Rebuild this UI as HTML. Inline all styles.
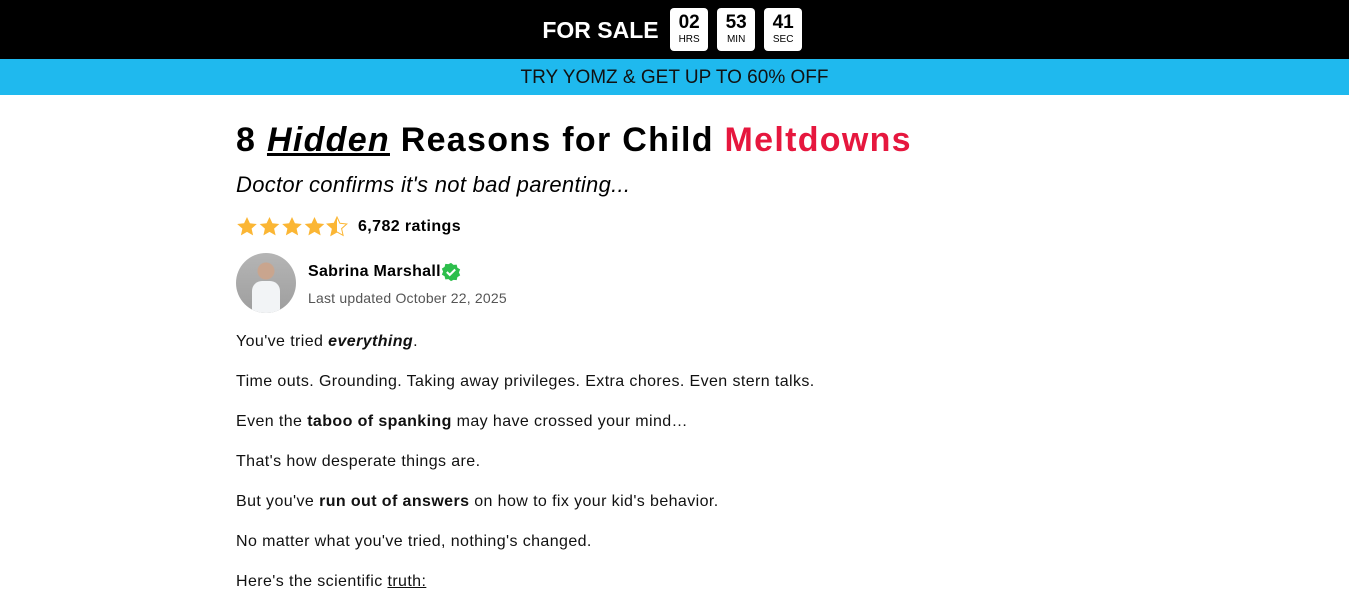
<!DOCTYPE html>
<html><head><meta charset="utf-8"><style>
body{margin:0;background:#fff;font-family:"Liberation Sans",sans-serif;color:#000;width:1349px;height:597px;overflow:hidden}
.top{height:59px;background:#000;display:flex;align-items:center;justify-content:center}
.fs{color:#fff;font-weight:bold;font-size:23px;margin-right:7px;margin-top:2px}
.box{background:#fff;border-radius:4px;width:38px;height:43px;margin:0 4.5px;text-align:center;line-height:1}
.box b{display:block;font-size:19px;margin-top:5px}
.box span{font-size:10px;display:block;margin-top:3px}
.blue{height:36px;background:#1fb9ee;text-align:center;font-size:19px;line-height:37px;color:#111}
.c{position:absolute;left:236px}
h1{margin:0;font-size:34px;top:121px;white-space:nowrap;letter-spacing:1.3px}
h1 i{text-decoration:underline}
.sub{top:172px;font-size:22px;font-style:italic;letter-spacing:0.3px}
.rat{top:216px;display:flex;align-items:center;font-weight:bold;font-size:16px}
.auth{top:253px;display:flex}
.av{width:60px;height:60px;border-radius:50%;background:radial-gradient(circle at 50% 30%,#c9a58e 0 8px,transparent 9px),linear-gradient(#b5b5b5,#9e9e9e);position:relative;overflow:hidden}
.av:after{content:"";position:absolute;left:16px;top:28px;width:28px;height:36px;background:#f2f4f6;border-radius:10px 10px 0 0}
.nm{margin-left:12px}
.nm b{font-size:16px;display:flex;align-items:center;margin-top:9px}
.nm div{font-size:14px;color:#555;margin-top:8px;letter-spacing:0.2px}
p{position:absolute;left:236px;margin:0;font-size:16px;color:#111;letter-spacing:0.4px}
</style></head><body>
<div class="top"><div class="fs">FOR SALE</div>
<div class="box"><b>02</b><span>HRS</span></div>
<div class="box"><b>53</b><span>MIN</span></div>
<div class="box"><b>41</b><span>SEC</span></div></div>
<div class="blue">TRY YOMZ &amp; GET UP TO 60% OFF</div>
<h1 class="c">8 <i>Hidden</i> Reasons for Child <span style="color:#e6173e">Meltdowns</span></h1>
<div class="c sub">Doctor confirms it's not bad parenting...</div>
<div class="c rat">
<svg width="112" height="22" viewBox="0 0 112 22">
<defs><path id="s" d="M11 1l2.9 6.3 6.9.7-5.2 4.6 1.5 6.8L11 15.9 4.9 19.4l1.5-6.8L1.2 8l6.9-.7z"/><clipPath id="h"><rect x="88" y="0" width="11" height="22"/></clipPath></defs>
<use href="#s" fill="#fbb634"/><use href="#s" x="22.5" fill="#fbb634"/><use href="#s" x="45" fill="#fbb634"/><use href="#s" x="67.5" fill="#fbb634"/>
<use href="#s" x="90" fill="#fff" stroke="#fbb634" stroke-width="1"/><g clip-path="url(#h)" transform="translate(2,0)"><use href="#s" x="88" fill="#fbb634"/></g>
</svg><span style="margin-left:10px;letter-spacing:0.4px">6,782 ratings</span></div>
<div class="c auth"><div class="av"></div><div class="nm"><b style="letter-spacing:0.3px">Sabrina Marshall<svg width="20" height="20" viewBox="0 0 24 24"><path d="M12 1l3 2.5 3.8-.3.9 3.7 3.3 2-1.5 3.6 1.5 3.6-3.3 2-.9 3.7-3.8-.3L12 23l-3-2.5-3.8.3-.9-3.7L1 15.1l1.5-3.6L1 7.9l3.3-2 .9-3.7 3.8.3z" fill="#2dbe4c"/><path d="M7 12l3.5 3.5L17 9" stroke="#fff" stroke-width="2.5" fill="none"/></svg></b><div>Last updated October 22, 2025</div></div></div>
<p style="top:333px">You've tried <b><i>everything</i></b>.</p>
<p style="top:373px">Time outs. Grounding. Taking away privileges. Extra chores. Even stern talks.</p>
<p style="top:413px">Even the <b>taboo of spanking</b> may have crossed your mind…</p>
<p style="top:453px">That's how desperate things are.</p>
<p style="top:493px">But you've <b>run out of answers</b> on how to fix your kid's behavior.</p>
<p style="top:533px">No matter what you've tried, nothing's changed.</p>
<p style="top:573px">Here's the scientific <u>truth:</u></p>
</body></html>
